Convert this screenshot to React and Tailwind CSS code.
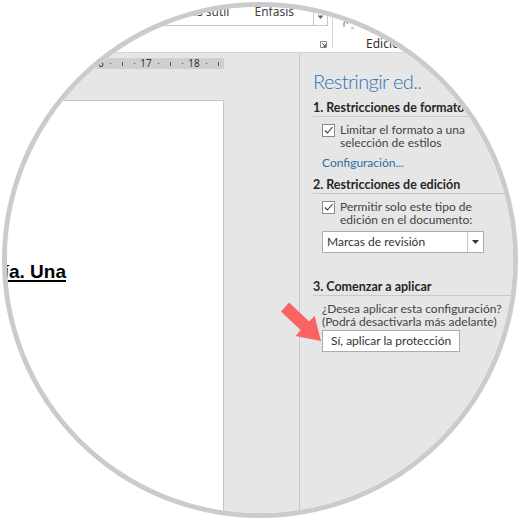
import React from "react";

const rulerMarks = [
  "dot", "tick", "dot", "15", "dot", "tick", "dot", "16", "dot",
  "tick", "dot", "17", "dot", "tick", "dot", "18", "dot", "tick",
];

const Checkbox = () => (
  <span className="mt-[1px] flex h-[13px] w-[13px] shrink-0 items-center justify-center border border-[#8a8a8a] bg-white">
    <svg width="11" height="11" viewBox="0 0 11 11">
      <path d="M2 5.5 L4.5 8 L9.5 2" fill="none" stroke="#3a3a3a" strokeWidth="1.1" />
    </svg>
  </span>
);

const Heading = ({ children, className = "" }) => (
  <div
    className={`border-b border-[#c8c8c8] text-[12.5px] font-bold leading-[16px] text-[#262626] whitespace-nowrap ${className}`}
  >
    {children}
  </div>
);

const Ribbon = () => (
  <div className="flex h-[53px] border-b border-[#d5d5d5] bg-white text-[12px] text-[#444]">
    <div className="flex h-[27px] w-[328px] -mt-[1px] justify-end border-b border-r border-[#c6c6c6]">
      <div className="flex items-center gap-[25px] pr-[19px] whitespace-nowrap">
        <span>Énfasis sutil</span>
        <span>Énfasis</span>
      </div>
      <div className="flex w-[14px] flex-col items-center border-l border-[#c6c6c6] pt-[14px]">
        <span className="h-px w-[6px] bg-[#666]" />
        <svg width="7" height="5" viewBox="0 0 7 5" className="mt-[1px]">
          <path d="M0.5 0.5 L6.5 0.5 L3.5 4 Z" fill="#666" />
        </svg>
      </div>
    </div>
    <div className="ml-[-8px] pt-[41px]">
      <svg width="7" height="7" viewBox="0 0 7 7">
        <path d="M0.5 0.5 H6.5 V6.5 H0.5 Z" fill="none" stroke="#8a8a8a" strokeWidth="1" />
        <path d="M2 2 L5.5 5.5 M5.5 3 V5.5 H3" fill="none" stroke="#6a6a6a" strokeWidth="1" />
      </svg>
    </div>
    <div className="ml-[5px] h-[48px] w-px bg-[#d5d5d5]" />
    <div className="flex-1">
      <svg width="12" height="10" viewBox="0 0 12 10" className="ml-[10px] mt-[19px]">
        <path d="M1 8 V3 H6 M4 1 L6 3 L4 5" fill="none" stroke="#7a7a7a" strokeWidth="1" />
        <path d="M8 9 H11" stroke="#9a9a9a" strokeWidth="1" />
      </svg>
      <div className="ml-[33px] mt-[8px] leading-[14px] text-[#333]">Edición</div>
    </div>
  </div>
);

const Ruler = () => (
  <div className="flex h-[47px] items-start">
    <div className="mt-[5px] flex h-[11px] w-[224px] items-center justify-end bg-[#cfcfcf] text-[10px] leading-[11px] text-[#333]">
      {rulerMarks.map((m, i) => (
        <div key={i} className="flex h-[11px] w-[12px] shrink-0 items-center justify-center">
          {m === "dot" && <span className="h-px w-px bg-[#555]" />}
          {m === "tick" && <span className="h-[4px] w-px bg-[#555]" />}
          {m !== "dot" && m !== "tick" && <span>{m}</span>}
        </div>
      ))}
    </div>
  </div>
);

const TaskPane = () => (
  <div
    className="relative flex-1 bg-[#e6e6e6] pl-[13px] text-[12px] text-[#444]"
    style={{ fontFamily: 'Lato, "Noto Sans", sans-serif' }}
  >
    <div className="mt-[14px] whitespace-nowrap text-[20px] font-light leading-[28px] tracking-[-0.6px] text-[#2e74b5]">
      Restringir ed..
    </div>
    <Heading className="mt-[5px]">1. Restricciones de formato</Heading>
    <div className="ml-[9px] mt-[6px] flex gap-[5px]">
      <Checkbox />
      <div className="leading-[13px] whitespace-nowrap">
        Limitar el formato a una
        <br />
        selección de estilos
      </div>
    </div>
    <div className="ml-[9px] mt-[7px] leading-[13px] text-[#2e6da4]">Configuración...</div>
    <Heading className="mt-[8px]">2. Restricciones de edición</Heading>
    <div className="ml-[9px] mt-[6px] flex gap-[5px]">
      <Checkbox />
      <div className="leading-[13px] whitespace-nowrap">
        Permitir solo este tipo de
        <br />
        edición en el documento:
      </div>
    </div>
    <div className="ml-[9px] mt-[5px] flex h-[22px] w-[162px] border border-[#adadad] bg-white">
      <div className="flex flex-1 items-center pl-[4px] text-[#333] whitespace-nowrap">Marcas de revisión</div>
      <div className="flex w-[16px] items-center justify-center border-l border-[#c8c8c8]">
        <svg width="7" height="4" viewBox="0 0 7 4">
          <path d="M0 0 H7 L3.5 4 Z" fill="#333" />
        </svg>
      </div>
    </div>
    <Heading className="mt-[26px]">3. Comenzar a aplicar</Heading>
    <div className="ml-[9px] mt-[6px] leading-[13px] whitespace-nowrap">
      ¿Desea aplicar esta configuración?
      <br />
      (Podrá desactivarla más adelante)
    </div>
    <div className="ml-[9px] mt-[2px] flex h-[22px] w-fit items-center border border-[#adadad] bg-white px-[8px] text-[#333] whitespace-nowrap">
      Sí, aplicar la protección
    </div>
    <svg
      className="absolute left-[-22px] top-[247px]"
      width="44"
      height="42"
      viewBox="278 298 44 42"
    >
      <polygon
        points="280.9,309.4 289.1,300.6 309.1,319.5 314.6,313.7 321,339 295.4,334.1 300.9,328.3"
        fill="#fb6262"
      />
    </svg>
  </div>
);

export default function App() {
  return (
    <div
      className="h-[520px] w-[520px] bg-white p-[2px]"
      style={{ fontFamily: '"Noto Sans", "Open Sans", sans-serif' }}
    >
      <div className="h-[516px] w-[516px] overflow-hidden rounded-full border-[5px] border-[#cbcbcb]">
        <div className="-ml-[7px] -mt-[7px] flex h-[520px] w-[520px] flex-col bg-[#e6e6e6]">
          <Ribbon />
          <div className="flex flex-1">
            <div className="flex w-[300px] flex-col border-r border-[#c8c8c8]">
              <Ruler />
              <div className="flex-1 w-[224px] border-r border-t border-[#c6c6c6] bg-white">
                <div
                  className="mt-[161px] flex w-[66px] justify-end whitespace-nowrap text-[19px] font-bold leading-[20px] text-black underline decoration-[2px] underline-offset-[2px]"
                  style={{ fontFamily: '"Liberation Sans", Arial, sans-serif' }}
                >
                  ía. Una
                </div>
              </div>
            </div>
            <TaskPane />
          </div>
        </div>
      </div>
    </div>
  );
}
